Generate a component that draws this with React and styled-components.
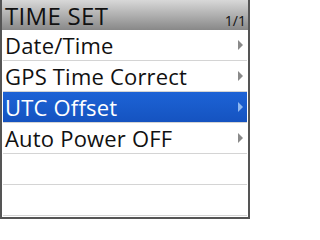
import React from 'react';
import styled, { createGlobalStyle } from 'styled-components';

const GlobalStyle = createGlobalStyle`
  html, body {
    margin: 0;
    padding: 0;
    background: #ffffff;
  }
`;

const items = [
  { label: 'Date/Time' },
  { label: 'GPS Time Correct' },
  { label: 'UTC Offset', selected: true },
  { label: 'Auto Power OFF' },
  { label: '', empty: true },
  { label: '', empty: true }
];

const App = () => {
  return (
    <>
      <GlobalStyle />
      <Screen>
        <Header>
          <Title>TIME SET</Title>
          <Page>1/1</Page>
        </Header>
        <List>
          {items.map((item, i) => (
            <Row key={i} $selected={item.selected}>
              <Label $selected={item.selected}>{item.label}</Label>
              {!item.empty && <Arrow $selected={item.selected} />}
            </Row>
          ))}
        </List>
      </Screen>
    </>
  );
};

const Screen = styled.div`
  width: 250px;
  height: 219px;
  box-sizing: border-box;
  border: 2px solid #555555;
  border-top: none;
  display: flex;
  flex-direction: column;
  background: #ffffff;
  font-family: 'Open Sans', 'Noto Sans', sans-serif;
  overflow: hidden;
`;

const Header = styled.div`
  height: 30px;
  flex-shrink: 0;
  display: flex;
  align-items: flex-end;
  justify-content: space-between;
  padding: 0 2px 0 3px;
  background: linear-gradient(#d8d8d8, #888888);
`;

const Title = styled.div`
  font-size: 24px;
  line-height: 29px;
  color: #111111;
  letter-spacing: 0.3px;
`;

const Page = styled.div`
  font-size: 14px;
  line-height: 14px;
  color: #111111;
  padding-bottom: 2px;
`;

const List = styled.div`
  flex: 1;
  display: flex;
  flex-direction: column;
`;

const Row = styled.div`
  height: 31px;
  flex-shrink: 0;
  box-sizing: border-box;
  display: flex;
  align-items: center;
  justify-content: space-between;
  margin: 0 1px;
  padding: 0 4px 0 2px;
  border-bottom: 1px solid #d4d4d4;
  background: ${(p) => (p.$selected ? 'linear-gradient(#1d63d6, #1553c0)' : 'transparent')};
`;

const Label = styled.div`
  font-size: 22px;
  line-height: 30px;
  color: ${(p) => (p.$selected ? '#ffffff' : '#111111')};
  white-space: nowrap;
  letter-spacing: 0.2px;
`;

const Arrow = styled.div`
  width: 0;
  height: 0;
  border-top: 5px solid transparent;
  border-bottom: 5px solid transparent;
  border-left: 5px solid ${(p) => (p.$selected ? '#8fb8f0' : '#8a8a8a')};
`;

export default App;
